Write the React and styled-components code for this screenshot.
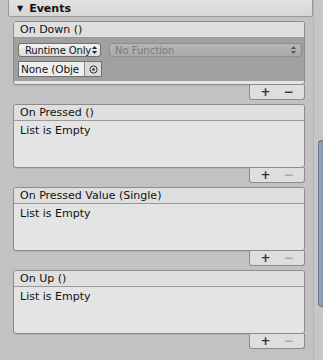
import React from "react";
import styled, { createGlobalStyle } from "styled-components";

const GlobalStyle = createGlobalStyle`
  html, body {
    margin: 0;
    padding: 0;
    background: #c2c2c2;
  }
  body {
    font-family: "DejaVu Sans", "Liberation Sans", sans-serif;
    font-size: 11px;
    color: #111;
  }
`;

const events = [
  { id: "down", name: "On Down ()", listeners: [{ mode: "Runtime Only", fn: "No Function", target: "None (Obje" }] },
  { id: "pressed", name: "On Pressed ()", listeners: [] },
  { id: "value", name: "On Pressed Value (Single)", listeners: [] },
  { id: "up", name: "On Up ()", listeners: [] },
];

const UpDown = ({ color = "#222" }) => (
  <svg width="5" height="8" viewBox="0 0 5 8">
    <path d="M2.5 0 L5 3 L0 3 Z" fill={color} />
    <path d="M2.5 8 L5 5 L0 5 Z" fill={color} />
  </svg>
);

const Picker = () => (
  <svg width="9" height="9" viewBox="0 0 9 9">
    <circle cx="4.5" cy="4.5" r="3.6" fill="none" stroke="#333" strokeWidth="1" />
    <circle cx="4.5" cy="4.5" r="1.3" fill="#333" />
  </svg>
);

const Listener = ({ mode, fn, target }) => (
  <ListenerWrap>
    <Row>
      <ModeButton>
        <span>{mode}</span>
        <UpDown />
      </ModeButton>
      <FunctionPopup>
        <span>{fn}</span>
        <UpDown color="#555" />
      </FunctionPopup>
    </Row>
    <Row>
      <ObjectField>
        <ObjectName>{target}</ObjectName>
        <PickerButton>
          <Picker />
        </PickerButton>
      </ObjectField>
    </Row>
  </ListenerWrap>
);

const EventGroup = ({ name, listeners }) => {
  const hasItems = listeners.length > 0;
  return (
    <Group>
      <Box>
        <BoxHeader>{name}</BoxHeader>
        <BoxBody>
          {hasItems ? (
            listeners.map((l, i) => <Listener key={i} {...l} />)
          ) : (
            <Empty>List is Empty</Empty>
          )}
        </BoxBody>
      </Box>
      <Footer>
        <FooterButton>+</FooterButton>
        <FooterButton disabled={!hasItems}>−</FooterButton>
      </Footer>
    </Group>
  );
};

const App = () => (
  <>
    <GlobalStyle />
    <Page>
      <Main>
        <SectionHeader>
          <Arrow>▼</Arrow>
          Events
        </SectionHeader>
        <List>
          {events.map((e) => (
            <EventGroup key={e.id} {...e} />
          ))}
        </List>
      </Main>
      <ScrollTrack>
        <Thumb />
      </ScrollTrack>
    </Page>
  </>
);

export default App;

const Page = styled.div`
  display: flex;
  height: 360px;
  overflow: hidden;
`;

const Main = styled.div`
  width: 305px;
  padding-left: 8px;
  box-sizing: border-box;
`;

const SectionHeader = styled.div`
  width: 305px;
  height: 18px;
  margin-top: -1px;
  box-sizing: border-box;
  border: 1px solid #999;
  border-radius: 0 0 2px 2px;
  background: linear-gradient(#e2e2e2, #d6d6d6);
  display: flex;
  align-items: center;
  padding-left: 8px;
  font-weight: bold;
  font-size: 11px;
  color: #111;
`;

const Arrow = styled.span`
  font-size: 8px;
  margin-right: 6px;
  font-weight: normal;
`;

const List = styled.div`
  display: flex;
  flex-direction: column;
  gap: 4px;
  margin: 4px 0 0 5px;
  width: 292px;
`;

const Group = styled.div`
  display: flex;
  flex-direction: column;
`;

const Box = styled.div`
  height: 64px;
  box-sizing: border-box;
  border: 1px solid #8c8c8c;
  border-radius: 3px;
  background: #e4e4e4;
  display: flex;
  flex-direction: column;
  overflow: hidden;
  box-shadow: 0 1px 0 rgba(0, 0, 0, 0.08);
`;

const BoxHeader = styled.div`
  height: 16px;
  flex: none;
  box-sizing: border-box;
  border-bottom: 1px solid #999;
  background: #dfdfdf;
  padding-left: 6px;
  line-height: 15px;
  color: #111;
`;

const BoxBody = styled.div`
  flex: 1;
  display: flex;
  flex-direction: column;
`;

const Empty = styled.div`
  padding: 3px 0 0 6px;
  line-height: 14px;
`;

const ListenerWrap = styled.div`
  background: #a0a0a0;
  height: 43px;
  box-sizing: border-box;
  padding: 5px 2px 0 4px;
  display: flex;
  flex-direction: column;
  gap: 4px;
`;

const Row = styled.div`
  display: flex;
  gap: 8px;
`;

const ModeButton = styled.div`
  width: 83px;
  height: 14px;
  box-sizing: border-box;
  border: 1px solid #6f6f6f;
  border-radius: 3px;
  background: linear-gradient(#f4f4f4, #dcdcdc);
  display: flex;
  align-items: center;
  justify-content: space-between;
  padding: 0 3px 0 6px;
  font-size: 10px;
  letter-spacing: -0.15px;
  color: #111;
  white-space: nowrap;
`;

const FunctionPopup = styled.div`
  flex: 1;
  height: 14px;
  box-sizing: border-box;
  border: 1px solid #8e8e8e;
  border-radius: 3px;
  background: linear-gradient(#b6b6b6, #aaaaaa);
  display: flex;
  align-items: center;
  justify-content: space-between;
  padding: 0 5px 0 5px;
  font-size: 10px;
  color: #7a7a7a;
`;

const ObjectField = styled.div`
  display: flex;
  width: 84px;
  height: 16px;
  box-sizing: border-box;
  border: 1px solid #6f6f6f;
  background: #efefef;
`;

const ObjectName = styled.div`
  flex: 1;
  white-space: nowrap;
  padding-left: 2px;
  line-height: 14px;
  font-size: 10.5px;
  letter-spacing: -0.1px;
  color: #111;
`;

const PickerButton = styled.div`
  width: 16px;
  flex: none;
  border-left: 1px solid #8a8a8a;
  background: #dadada;
  display: flex;
  align-items: center;
  justify-content: center;
`;

const Footer = styled.div`
  align-self: flex-end;
  width: 56px;
  height: 15px;
  box-sizing: border-box;
  border: 1px solid #8c8c8c;
  border-top: none;
  border-radius: 0 0 3px 3px;
  background: #dedede;
  display: flex;
  justify-content: space-around;
  align-items: center;
  padding: 0 4px;
`;

const FooterButton = styled.span`
  font-weight: bold;
  font-size: 12px;
  line-height: 12px;
  color: ${(p) => (p.disabled ? "#a8a8a8" : "#333")};
`;

const ScrollTrack = styled.div`
  flex: 1;
  border-left: 1px solid #b3b3b3;
  margin-left: 8px;
  background: #c6c6c6;
  display: flex;
  flex-direction: column;
  align-items: flex-end;
`;

const Thumb = styled.div`
  margin-top: 140px;
  width: 5px;
  height: 167px;
  box-sizing: border-box;
  border: 1px solid #62728a;
  border-right: none;
  border-radius: 4px 0 0 4px;
  background: linear-gradient(90deg, #98a8bf, #8595ad);
`;
